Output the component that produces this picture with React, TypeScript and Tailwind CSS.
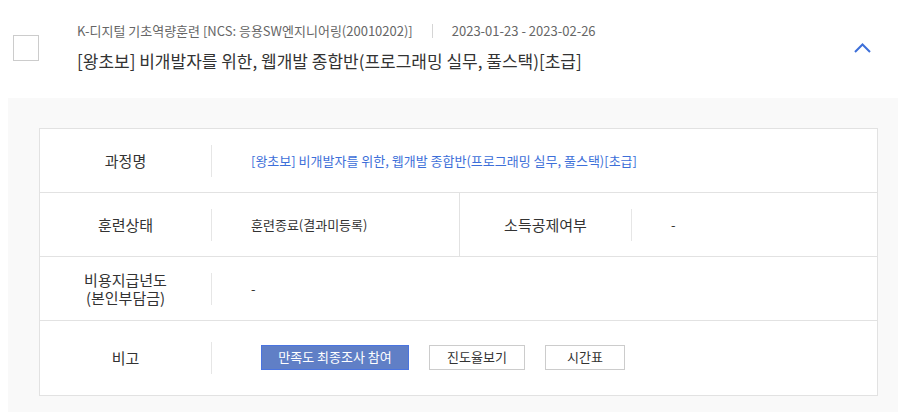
import React from "react";

const font = { fontFamily: '"Noto Sans CJK KR", "Noto Sans", sans-serif' };

function Label({ children }: { children: React.ReactNode }) {
  return (
    <>
      <div className="w-[171px] shrink-0 text-center text-[15px] leading-[18px] text-[#333]">
        {children}
      </div>
      <div className="h-8 w-px shrink-0 bg-[#e6e6e6]" />
    </>
  );
}

export default function App() {
  return (
    <div className="w-[898px] h-[412px] overflow-hidden bg-white" style={font}>
      {/* header */}
      <div className="relative flex h-[98px]">
        <div className="ml-[13px] mt-[35px] h-[26px] w-[26px] shrink-0 border border-[#cccccc] bg-white" />
        <div className="ml-[38px] pt-[20px]">
          <div className="flex items-center text-[13px] leading-[22px] text-[#666]">
            <span>K-디지털 기초역량훈련 [NCS: 응용SW엔지니어링(20010202)]</span>
            <span className="mx-[19px] h-[14px] w-px bg-[#d5d5d5]" />
            <span>2023-01-23 - 2023-02-26</span>
          </div>
          <div className="mt-[6px] text-[17px] leading-[26px] text-[#333]">
            [왕초보] 비개발자를 위한, 웹개발 종합반(프로그래밍 실무, 풀스택)[초급]
          </div>
        </div>
        <svg
          className="absolute left-[853px] top-[42px]"
          width="20"
          height="12"
          viewBox="0 0 20 12"
          fill="none"
        >
          <polyline points="2,10 9.5,2.5 17,10" stroke="#3d6fd9" strokeWidth="2" />
        </svg>
      </div>

      {/* detail panel */}
      <div className="ml-[8px] bg-[#f9f9f9] pl-[31px] pr-[20px] pt-[30px] pb-[20px]">
        <div className="w-[839px] border border-[#e2e2e2] bg-white">
          <div className="flex h-[64px] items-center border-b border-[#e2e2e2]">
            <Label>과정명</Label>
            <div className="pl-[39px] text-[13px] text-[#3d6fd9]">
              [왕초보] 비개발자를 위한, 웹개발 종합반(프로그래밍 실무, 풀스택)[초급]
            </div>
          </div>
          <div className="flex h-[64px] border-b border-[#e2e2e2]">
            <div className="flex w-[419px] items-center">
              <Label>훈련상태</Label>
              <div className="pl-[39px] text-[13px] text-[#333]">훈련종료(결과미등록)</div>
            </div>
            <div className="flex flex-1 items-center border-l border-[#e2e2e2]">
              <Label>소득공제여부</Label>
              <div className="pl-[39px] text-[13px] text-[#333]">-</div>
            </div>
          </div>
          <div className="flex h-[64px] items-center border-b border-[#e2e2e2]">
            <Label>
              <div>비용지급년도</div>
              <div>(본인부담금)</div>
            </Label>
            <div className="pl-[39px] text-[13px] text-[#333]">-</div>
          </div>
          <div className="flex h-[74px] items-center">
            <Label>비고</Label>
            <div className="-mt-[2px] flex items-center gap-[20px] pl-[49px] text-[13px]">
              <button className="h-[25px] w-[148px] border border-[#4a74e0] bg-[#607fc6] text-white">
                만족도 최종조사 참여
              </button>
              <button className="h-[25px] w-[96px] border border-[#cccccc] bg-white text-[#333]">
                진도율보기
              </button>
              <button className="h-[25px] w-[80px] border border-[#cccccc] bg-white text-[#333]">
                시간표
              </button>
            </div>
          </div>
        </div>
      </div>
    </div>
  );
}
